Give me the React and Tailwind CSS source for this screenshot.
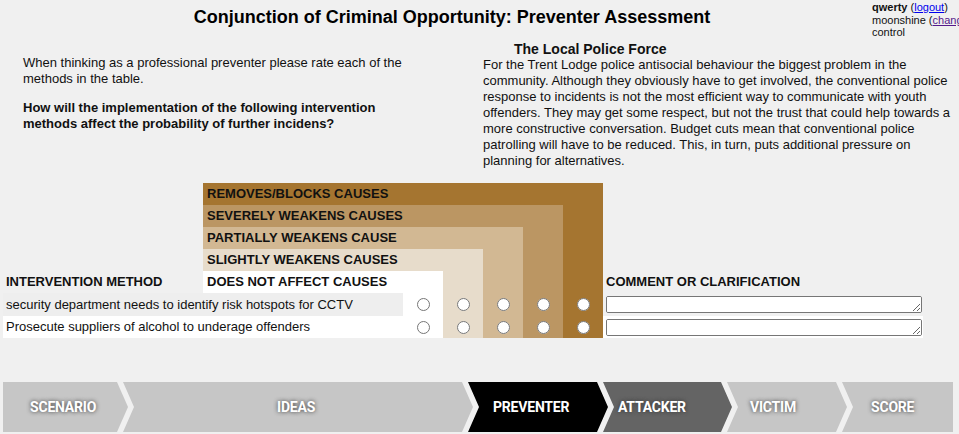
import React from 'react';

// Rating columns, from "does not affect" to "removes/blocks"
const shades = ['#ffffff', '#e7dccb', '#d2b893', '#bb9663', '#a57530'];

const levels = [
  'REMOVES/BLOCKS CAUSES',
  'SEVERELY WEAKENS CAUSES',
  'PARTIALLY WEAKENS CAUSE',
  'SLIGHTLY WEAKENS CAUSES',
];

const methods = [
  { text: 'security department needs to identify risk hotspots for CCTV', bg: 'bg-[#eeeeee]', side: 'bg-[#f0f0f0]' },
  { text: 'Prosecute suppliers of alcohol to underage offenders', bg: 'bg-white', side: 'bg-white' },
];

const steps = [
  { label: 'SCENARIO', width: 'w-[125px]', pad: 'pl-[27px]', color: 'bg-[#c6c6c6]', first: true },
  { label: 'IDEAS', width: 'w-[350px]', pad: 'pl-[154px]', color: 'bg-[#c6c6c6]' },
  { label: 'PREVENTER', width: 'w-[140px]', pad: 'pl-[25px]', color: 'bg-black', active: true },
  { label: 'ATTACKER', width: 'w-[129px]', pad: 'pl-[15px]', color: 'bg-[#646464]' },
  { label: 'VICTIM', width: 'w-[120px]', pad: 'pl-[23px]', color: 'bg-[#c6c6c6]' },
  { label: 'SCORE', width: 'w-[111px]', pad: 'pl-[29px]', color: 'bg-[#c6c6c6]', last: true },
];

const headFont = 'font-bold text-[13px] text-[#111]';

const Step = ({ step }) => {
  const clip = step.first
    ? '[clip-path:polygon(0_0,calc(100%_-_11px)_0,100%_50%,calc(100%_-_11px)_100%,0_100%)]'
    : step.last
    ? '[clip-path:polygon(0_0,100%_0,100%_100%,0_100%,11px_50%)]'
    : '[clip-path:polygon(0_0,calc(100%_-_11px)_0,100%_50%,calc(100%_-_11px)_100%,0_100%,11px_50%)]';
  return (
    <div
      className={`${step.width} ${step.color} ${clip} ${step.pad} ${step.first ? '' : '-ml-[5px]'} h-[50px] shrink-0 flex items-center`}
    >
      <span
        className={`font-['Roboto',sans-serif] font-bold text-[14px] tracking-[-0.2px] text-white whitespace-nowrap ${
          step.active ? '' : '[text-shadow:0_0_4px_#333]'
        }`}
      >
        {step.label}
      </span>
    </div>
  );
};

export default function App() {
  return (
    <div className="w-full h-[434px] bg-[#f0f0f0] overflow-hidden font-['Liberation_Sans',Arial,sans-serif] text-[#111]">
      {/* Title + signed-in user */}
      <div className="flex h-[41px]">
        <div className="w-[872px] shrink-0 pl-[32px] pt-[7px] text-center text-[18px] leading-[21px] font-bold text-black">
          Conjunction of Criminal Opportunity: Preventer Assessment
        </div>
        <div className="shrink-0 pt-[1px] text-[11px] leading-[12.5px] whitespace-nowrap text-[#111]">
          <div>
            <b>qwerty</b> (<span className="text-[#0000ee] underline">logout</span>)
          </div>
          <div>
            moonshine (<span className="text-[#551a8b] underline">change</span>)
          </div>
          <div>control</div>
        </div>
      </div>

      {/* Instructions and scenario */}
      <div className="flex">
        <div className="w-[483px] shrink-0 pl-[23px] pr-[58px] pt-[14px] text-[13px] leading-4">
          <p>When thinking as a professional preventer please rate each of the methods in the table.</p>
          <p className="mt-[13px] font-bold">
            How will the implementation of the following intervention methods affect the probability of further incidens?
          </p>
        </div>
        <div className="w-[474px] text-[13px] leading-4">
          <h2 className="pl-[31px] text-[14px] font-bold leading-4">The Local Police Force</h2>
          <p>
            For the Trent Lodge police antisocial behaviour the biggest problem in the community. Although they
            obviously have to get involved, the conventional police response to incidents is not the most efficient
            way to communicate with youth offenders. They may get some respect, but not the trust that could help
            towards a more constructive conversation. Budget cuts mean that conventional police patrolling will have to
            be reduced. This, in turn, puts additional pressure on planning for alternatives.
          </p>
        </div>
      </div>

      {/* Rating table */}
      <div className="mt-[14px] ml-[3px] grid grid-cols-[200px_200px_40px_40px_40px_40px_40px_320px] grid-rows-[22px_22px_22px_22px_22px_23px_22px]">
        {levels.map((label, i) => {
          const span = 4 - i; // radio columns covered by this header band
          return (
            <React.Fragment key={label}>
              <div />
              <div
                className={`flex items-center pl-[4px] whitespace-nowrap ${headFont}`}
                style={{ gridColumn: `2 / span ${span + 2}`, background: shades[4 - i] }}
              >
                {label}
              </div>
              {shades.slice(span + 1).map((c, k) => (
                <div key={k} style={{ background: c }} />
              ))}
              <div />
            </React.Fragment>
          );
        })}

        <div className={`flex items-center pl-[3px] ${headFont}`}>INTERVENTION METHOD</div>
        <div className={`col-span-2 flex items-center pl-[4px] bg-white ${headFont}`}>DOES NOT AFFECT CAUSES</div>
        {shades.slice(1).map((c, k) => (
          <div key={k} style={{ background: c }} />
        ))}
        <div className={`flex items-center pl-[3px] ${headFont}`}>COMMENT OR CLARIFICATION</div>

        {methods.map((m, r) => (
          <React.Fragment key={m.text}>
            <div className={`col-span-2 flex items-center pl-[3px] text-[13px] text-[#111] ${m.bg}`}>{m.text}</div>
            {shades.map((c, k) => (
              <div key={k} className="flex items-center justify-center" style={{ background: c }}>
                <input type="radio" name={`method-${r}`} className="m-0 w-[13px] h-[13px]" />
              </div>
            ))}
            <div className={`flex items-center pl-[3px] ${m.side}`}>
              <textarea className="block w-[316px] h-[17px] border border-[#767676] rounded-[2px] bg-white" />
            </div>
          </React.Fragment>
        ))}
      </div>

      {/* Progress steps */}
      <div className="mt-[44px] ml-[3px] flex">
        {steps.map((s) => (
          <Step key={s.label} step={s} />
        ))}
      </div>
    </div>
  );
}
